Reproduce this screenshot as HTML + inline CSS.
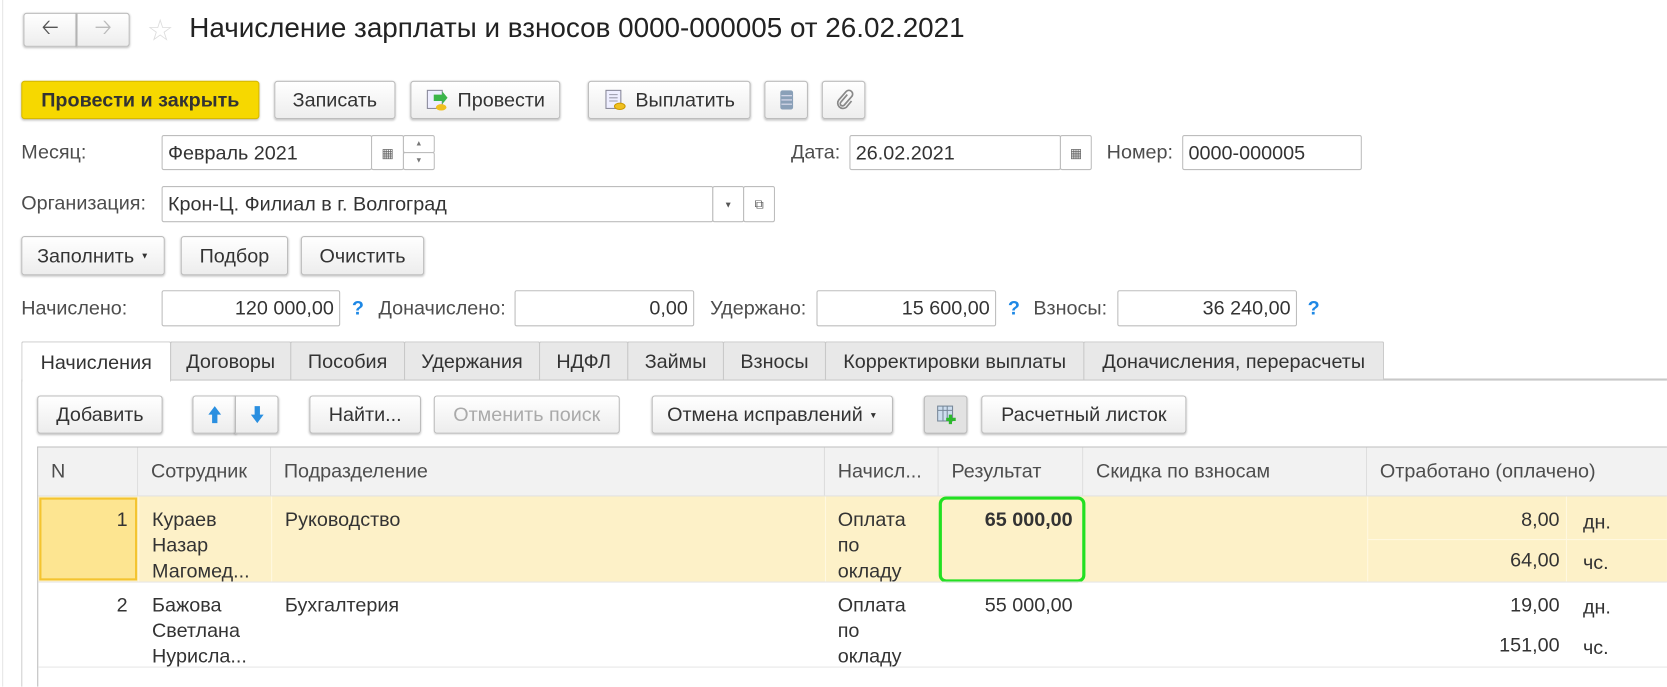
<!DOCTYPE html>
<html><head><meta charset="utf-8"><style>
*{box-sizing:border-box;margin:0;padding:0}
html,body{width:1667px;height:687px;overflow:hidden}
body{background:#fff;font-family:"Liberation Sans",Arial,sans-serif;font-size:18.6px;color:#333;position:relative}
#w{position:absolute;left:0;top:0;width:1568px;height:646px;overflow:hidden;transform:scale(1.0631);transform-origin:0 0}
.a{position:absolute}
.btn{position:absolute;border:1px solid #bcbcbc;border-radius:3px;background:linear-gradient(#fff,#ededed);box-shadow:0 1px 2px rgba(0,0,0,.25);display:flex;align-items:center;justify-content:center;color:#333;white-space:nowrap}
.fld{position:absolute;border:1px solid #bdbdbd;border-radius:2px;background:#fff;display:flex;align-items:center;padding:0 5px;white-space:nowrap;color:#333}
.r{justify-content:flex-end}
.lbl{position:absolute;color:#4d4d4d;white-space:nowrap}
.q{position:absolute;color:#1e88e5;font-weight:bold}
.tab{position:absolute;top:321px;height:36px;background:#e8e8e8;border:1px solid #c8c8c8;border-bottom:none;display:flex;align-items:center;justify-content:center;color:#333;border-radius:2px 2px 0 0;white-space:nowrap}
.th{position:absolute;top:421px;height:45px;background:#f2f2f2;border-right:1px solid #dcdcdc;padding:11px 0 0 12px;color:#4d4d4d;white-space:nowrap;overflow:hidden}
.c{position:absolute;line-height:24px;color:#333;white-space:nowrap}
</style></head><body><div id="w">
<div class="a" style="left:2px;top:0;width:1px;height:646px;background:#e6e6e6"></div>
<div class="btn" style="left:22px;top:12px;width:50px;height:32px;border-radius:3px 0 0 3px;font-size:20px;color:#555">&#129120;</div>
<div class="btn" style="left:72px;top:12px;width:50px;height:32px;border-radius:0 3px 3px 0;font-size:20px;color:#bbb">&#129122;</div>
<div class="a" style="left:138px;top:12px;font-size:28px;color:#ddd">☆</div>
<div class="a" style="left:178px;top:11px;font-size:26.2px;color:#222">Начисление зарплаты и взносов 0000-000005 от 26.02.2021</div>
<div class="btn" style="left:20px;top:76px;width:224px;height:36px;background:#f6d800;border-color:#d7b900;font-weight:bold;color:#333">Провести и закрыть</div>
<div class="btn" style="left:258px;top:76px;width:114px;height:36px">Записать</div>
<div class="btn" style="left:386px;top:76px;width:141px;height:36px"><svg width="22" height="22" style="margin-right:8px"><rect x="2" y="2" width="14" height="17" fill="#eef" stroke="#889"/><path d="M8 6h8v-3l5 6-5 6v-3h-8z" fill="#3bb54a"/><ellipse cx="15" cy="18" rx="5" ry="3" fill="#f0c020"/></svg>Провести</div>
<div class="btn" style="left:553px;top:76px;width:153px;height:36px"><svg width="22" height="22" style="margin-right:8px"><rect x="2" y="2" width="14" height="17" fill="#eef" stroke="#889"/><path d="M5 6h8M5 9h8M5 12h8" stroke="#99a"/><ellipse cx="15" cy="17" rx="5" ry="3" fill="#f0c020" stroke="#c90"/></svg>Выплатить</div>
<div class="btn" style="left:719px;top:76px;width:41px;height:36px"><svg width="14" height="20"><rect x="1" y="1" width="12" height="18" rx="2" fill="#8aa0b8"/><path d="M2 6h10M2 10h10M2 14h10" stroke="#dde"/></svg></div>
<div class="btn" style="left:773px;top:76px;width:41px;height:36px"><svg width="18" height="20"><path d="M12 5l-6 7a2 2 0 0 0 3 3l7-8a3.5 3.5 0 0 0-5-5l-7 8a5 5 0 0 0 7 7l5-6" fill="none" stroke="#888" stroke-width="1.6"/></svg></div>
<div class="lbl" style="left:20px;top:132px">Месяц:</div>
<div class="fld" style="left:152px;top:127px;width:198px;height:33px">Февраль 2021</div>
<div class="fld" style="left:349px;top:127px;width:31px;height:33px;justify-content:center;font-size:12px;color:#666">▦</div>
<div class="fld" style="left:379px;top:127px;width:30px;height:17px;justify-content:center;font-size:7px;color:#777">▲</div>
<div class="fld" style="left:379px;top:143px;width:30px;height:17px;justify-content:center;font-size:7px;color:#777">▼</div>
<div class="lbl" style="left:744px;top:132px">Дата:</div>
<div class="fld" style="left:799px;top:127px;width:199px;height:33px">26.02.2021</div>
<div class="fld" style="left:997px;top:127px;width:30px;height:33px;justify-content:center;font-size:12px;color:#666">▦</div>
<div class="lbl" style="left:1041px;top:132px">Номер:</div>
<div class="fld" style="left:1112px;top:127px;width:169px;height:33px">0000-000005</div>
<div class="lbl" style="left:20px;top:180px">Организация:</div>
<div class="fld" style="left:152px;top:175px;width:519px;height:34px">Крон-Ц. Филиал в г. Волгоград</div>
<div class="fld" style="left:670px;top:175px;width:30px;height:34px;justify-content:center;font-size:8px;color:#555">▼</div>
<div class="fld" style="left:699px;top:175px;width:30px;height:34px;justify-content:center;font-size:12px;color:#555">⧉</div>
<div class="btn" style="left:20px;top:222px;width:135px;height:37px">Заполнить <span style="font-size:8px;margin-left:6px">▼</span></div>
<div class="btn" style="left:170px;top:222px;width:101px;height:37px">Подбор</div>
<div class="btn" style="left:283px;top:222px;width:116px;height:37px">Очистить</div>
<div class="lbl" style="left:20px;top:279px">Начислено:</div>
<div class="fld r" style="left:152px;top:273px;width:168px;height:34px">120 000,00</div>
<div class="q" style="left:331px;top:279px">?</div>
<div class="lbl" style="left:356px;top:279px">Доначислено:</div>
<div class="fld r" style="left:484px;top:273px;width:169px;height:34px">0,00</div>
<div class="lbl" style="left:668px;top:279px">Удержано:</div>
<div class="fld r" style="left:768px;top:273px;width:169px;height:34px">15 600,00</div>
<div class="q" style="left:948px;top:279px">?</div>
<div class="lbl" style="left:972px;top:279px">Взносы:</div>
<div class="fld r" style="left:1051px;top:273px;width:169px;height:34px">36 240,00</div>
<div class="q" style="left:1230px;top:279px">?</div>
<div class="a" style="left:160px;top:356px;width:1420px;height:2px;background:#c8c8c8"></div>
<div class="tab" style="left:20px;width:141px;background:#fff;height:38px">Начисления</div>
<div class="tab" style="left:160px;width:114px">Договоры</div>
<div class="tab" style="left:273px;width:108px">Пособия</div>
<div class="tab" style="left:380px;width:128px">Удержания</div>
<div class="tab" style="left:507px;width:84px">НДФЛ</div>
<div class="tab" style="left:590px;width:91px">Займы</div>
<div class="tab" style="left:680px;width:97px">Взносы</div>
<div class="tab" style="left:776px;width:244px">Корректировки выплаты</div>
<div class="tab" style="left:1019px;width:283px">Доначисления, перерасчеты</div>
<div class="a" style="left:20px;top:357px;width:1px;height:289px;background:#d0d0d0"></div>
<div class="btn" style="left:35px;top:372px;width:118px;height:36px">Добавить</div>
<div class="btn" style="left:181px;top:372px;width:41px;height:36px;border-radius:3px 0 0 3px"><svg width="14" height="18"><path d="M7 1l6 8h-3.5v8h-5v-8h-3.5z" fill="#2a8fe0"/></svg></div>
<div class="btn" style="left:221px;top:372px;width:41px;height:36px;border-radius:0 3px 3px 0"><svg width="14" height="18"><path d="M7 17l6-8h-3.5v-8h-5v8h-3.5z" fill="#2a8fe0"/></svg></div>
<div class="btn" style="left:291px;top:372px;width:105px;height:36px">Найти...</div>
<div class="btn" style="left:408px;top:372px;width:175px;height:36px;color:#aaa;box-shadow:0 1px 1px rgba(0,0,0,.1)">Отменить поиск</div>
<div class="btn" style="left:613px;top:372px;width:227px;height:36px">Отмена исправлений <span style="font-size:8px;margin-left:6px">▼</span></div>
<div class="btn" style="left:869px;top:372px;width:41px;height:36px;background:#e2e2e2"><svg width="20" height="20"><rect x="2" y="2" width="14" height="14" fill="#cde" stroke="#789"/><path d="M2 6h14M7 2v14M11 2v14" stroke="#789"/><path d="M14 10v9M10 14.5h9" stroke="#2db82d" stroke-width="3"/></svg></div>
<div class="btn" style="left:923px;top:372px;width:193px;height:36px">Расчетный листок</div>
<div class="a" style="left:35px;top:420px;width:1540px;height:1px;background:#bdbdbd"></div>
<div class="a" style="left:35px;top:420px;width:1px;height:226px;background:#bdbdbd"></div>
<div class="th" style="left:36px;width:94px">N</div>
<div class="th" style="left:130px;width:125px">Сотрудник</div>
<div class="th" style="left:255px;width:521px">Подразделение</div>
<div class="th" style="left:776px;width:107px">Начисл...</div>
<div class="th" style="left:883px;width:136px">Результат</div>
<div class="th" style="left:1019px;width:267px">Скидка по взносам</div>
<div class="th" style="left:1286px;width:300px;border-right:none">Отработано (оплачено)</div>
<div class="a" style="left:36px;top:466px;width:1540px;height:1px;background:#e0e0e0"></div>
<div class="a" style="left:36px;top:467px;width:1540px;height:80px;background:#fdf1c8"></div>
<div class="a" style="left:37px;top:468px;width:92px;height:78px;background:#fde591;border:2px solid #f4c430"></div>
<div class="a" style="left:130px;top:467px;width:1px;height:80px;background:#fff8e0"></div>
<div class="a" style="left:255px;top:467px;width:1px;height:80px;background:#fff8e0"></div>
<div class="a" style="left:776px;top:467px;width:1px;height:80px;background:#fff8e0"></div>
<div class="a" style="left:1286px;top:467px;width:1px;height:80px;background:#fff8e0"></div>
<div class="a" style="left:1473px;top:467px;width:1px;height:80px;background:#fff8e0"></div>
<div class="a" style="left:1286px;top:507px;width:300px;height:1px;background:#fff8e0"></div>
<div class="c" style="left:100px;top:477px;width:20px;text-align:right">1</div>
<div class="c" style="left:143px;top:477px">Кураев<br>Назар<br>Магомед...</div>
<div class="c" style="left:268px;top:477px">Руководство</div>
<div class="c" style="left:788px;top:477px">Оплата<br>по<br>окладу</div>
<div class="c" style="left:873px;top:477px;width:136px;text-align:right;font-weight:bold">65 000,00</div>
<div class="c" style="left:1286px;top:477px;width:181px;text-align:right">8,00</div>
<div class="c" style="left:1489px;top:479px">дн.</div>
<div class="c" style="left:1286px;top:515px;width:181px;text-align:right">64,00</div>
<div class="c" style="left:1489px;top:517px">чс.</div>
<div class="a" style="left:883px;top:467px;width:138px;height:81px;border:3px solid #22e022;border-radius:7px"></div>
<div class="a" style="left:36px;top:547px;width:1540px;height:1px;background:#e6e6e6"></div>
<div class="c" style="left:100px;top:557px;width:20px;text-align:right">2</div>
<div class="c" style="left:143px;top:557px">Бажова<br>Светлана<br>Нурисла...</div>
<div class="c" style="left:268px;top:557px">Бухгалтерия</div>
<div class="c" style="left:788px;top:557px">Оплата<br>по<br>окладу</div>
<div class="c" style="left:873px;top:557px;width:136px;text-align:right">55 000,00</div>
<div class="c" style="left:1286px;top:557px;width:181px;text-align:right">19,00</div>
<div class="c" style="left:1489px;top:559px">дн.</div>
<div class="c" style="left:1286px;top:595px;width:181px;text-align:right">151,00</div>
<div class="c" style="left:1489px;top:597px">чс.</div>
<div class="a" style="left:36px;top:627px;width:1540px;height:1px;background:#e6e6e6"></div>
</div></body></html>
